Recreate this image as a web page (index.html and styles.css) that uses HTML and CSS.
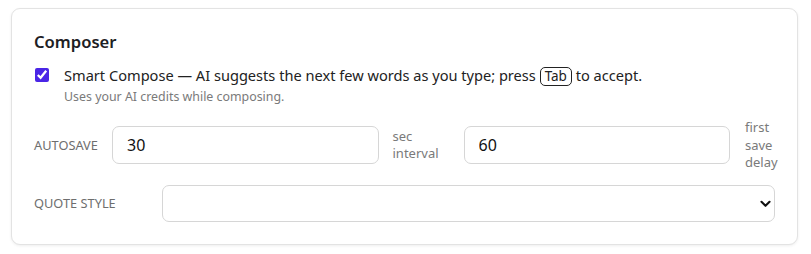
FILE: index.html
```html
<!DOCTYPE html>
<html lang="en">
<head>
<meta charset="utf-8">
<title>Composer settings</title>
<link rel="stylesheet" href="styles.css">
</head>
<body>
<section class="card">
  <h2 class="card-title">Composer</h2>
  <label class="check-row">
    <input type="checkbox" class="check" checked>
    <span class="check-text">
      <span class="check-main">Smart Compose — AI suggests the next few words as you type; press <kbd class="kbd">Tab</kbd> to accept.</span>
      <span class="check-hint">Uses your AI credits while composing.</span>
    </span>
  </label>
  <div class="field-row">
    <span class="field-label label-autosave">AUTOSAVE</span>
    <input class="text-input" type="text" value="30">
    <span class="unit unit-sec">sec interval</span>
    <input class="text-input" type="text" value="60">
    <span class="unit unit-first">first save delay</span>
  </div>
  <div class="field-row select-row">
    <span class="field-label label-quote">QUOTE STYLE</span>
    <div class="select-wrap">
      <select class="select"><option></option></select>
      <svg class="chev" viewBox="0 0 12 8" width="11" height="8"><path d="M1.6 1.6 L6 6 L10.4 1.6" fill="none" stroke="#111" stroke-width="2.3" stroke-linecap="round" stroke-linejoin="round"/></svg>
    </div>
  </div>
</section>
</body>
</html>
```
FILE: styles.css
```css
* { box-sizing: border-box; }
html, body { background: #ffffff; }
body {
  margin: 0;
  padding: 8px 13px 10px 11px;
  font-family: "Noto Sans", "Open Sans", sans-serif;
  color: #1f2328;
}
.card {
  border: 1px solid #e3e3e3;
  border-radius: 9px;
  box-shadow: 0 1px 3px rgba(0,0,0,0.07);
  padding: 21px 22px 22px 22px;
  background: #fff;
}
.card-title {
  margin: 0 0 11px 0;
  font-size: 16.6px;
  font-weight: 600;
  line-height: 24px;
  color: #1d2024;
}
.check-row {
  display: flex;
  align-items: flex-start;
  gap: 15px;
}
.check {
  margin: 3px 0 0 1px;
  width: 14px;
  height: 14px;
  accent-color: #4a25e6;
}
.check-text { display: flex; flex-direction: column; }
.check-main { font-size: 14.6px; line-height: 20px; color: #222; }
.check-hint { font-size: 12.4px; line-height: 20px; margin-top: 1px; color: #7a7a7a; }
.kbd {
  font-family: inherit;
  font-size: 13.5px;
  border: 1px solid #222;
  border-radius: 5px;
  padding: 0 4px;
  line-height: 17px;
  display: inline-block;
}
.field-row {
  display: flex;
  align-items: center;
  margin-top: 12px;
}
.field-label {
  font-size: 12.8px;
  color: #6e6e6e;
  flex: none;
}
.label-autosave { width: 78px; }
.label-quote { width: 128px; }
.text-input {
  flex: 1;
  min-width: 0;
  height: 38px;
  border: 1px solid #d6d6d6;
  border-radius: 7px;
  padding: 0 14px;
  font-family: "Noto Sans", sans-serif;
  font-size: 16px;
  color: #111;
  background: #fff;
}
.unit {
  font-size: 13px;
  line-height: 17.5px;
  color: #7a7a7a;
  flex: none;
}
.unit-sec { width: 46px; margin: 0 25px 0 14px; }
.unit-first { width: 30px; margin: 0 0 0 15px; }
.select-row { margin-top: 13px; }
.select-wrap { position: relative; flex: 1; }
.select {
  display: block;
  width: 100%;
  height: 37px;
  border: 1px solid #d6d6d6;
  border-radius: 7px;
  background: #fff;
  appearance: none;
  -webkit-appearance: none;
  font-family: inherit;
  font-size: 14px;
}
.chev {
  position: absolute;
  right: 4px;
  top: 15px;
  pointer-events: none;
}
```
